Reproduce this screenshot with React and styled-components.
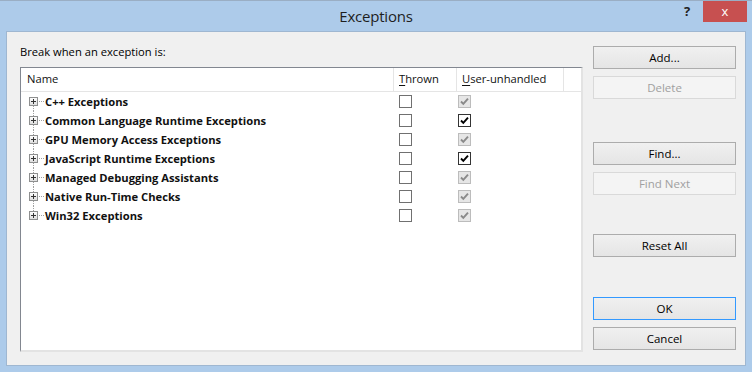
// Dependencies
import React from 'react';
import styled, { createGlobalStyle } from 'styled-components';

// Styles
const GlobalStyle = createGlobalStyle`
  html, body {
    margin: 0;
    padding: 0;
    background: #adcbea;
  }
  * {
    box-sizing: border-box;
  }
`

const Frame = styled.div`
  width: 752px;
  height: 372px;
  background: #adcbea;
  border-top: 1px solid #9aaec4;
  font-family: "Segoe UI", "Open Sans", "Noto Sans", sans-serif;
  color: #000;
  display: flex;
  flex-direction: column;
`

const TitleBar = styled.div`
  height: 30px;
  display: grid;
  grid-template-columns: 1fr auto 1fr;
  align-items: start;
`

const Title = styled.div`
  font-size: 15px;
  line-height: 30px;
  color: #1e1e1e;
  letter-spacing: -0.2px;
`

const Controls = styled.div`
  grid-column: 3;
  display: flex;
  justify-content: flex-end;
  align-items: flex-start;
  padding-right: 5px;
`

const HelpButton = styled.div`
  width: 26px;
  height: 21px;
  font-size: 13px;
  font-weight: bold;
  line-height: 21px;
  text-align: center;
  color: #222;
  margin-right: 3px;
`

const CloseButton = styled.div`
  width: 44px;
  height: 21px;
  background: #c75050;
  color: #fff;
  font-size: 13px;
  line-height: 20px;
  text-align: center;
`

const Client = styled.div`
  margin: 0 6px 6px 6px;
  flex: 1;
  background: #f0f0f0;
  border: 1px solid #9fb7d1;
  display: grid;
  grid-template-columns: 563px 143px;
  column-gap: 10px;
  padding: 0 9px 0 13px;
`

const LeftColumn = styled.div`
  display: flex;
  flex-direction: column;
  padding-top: 12px;
`

const Label = styled.div`
  font-size: 11.2px;
  line-height: 15px;
  margin-bottom: 8px;
`

const ListBox = styled.div`
  height: 285px;
  background: #fff;
  border-top: 1px solid #828790;
  border-left: 1px solid #828790;
  border-right: 2px solid #e3e3e3;
  border-bottom: 2px solid #e3e3e3;
  display: grid;
  grid-template-columns: 373px 63px 107px 1fr;
  grid-template-rows: 24px;
  grid-auto-rows: 19px;
  align-content: start;
`

const HeaderCell = styled.div`
  height: 24px;
  border-bottom: 1px solid #e5e5e5;
  border-right: ${p => (p.$last ? 'none' : '1px solid #e5e5e5')};
  padding-left: ${p => p.$pad}px;
  font-size: 11.2px;
  line-height: 22px;
  color: #111;

  u {
    text-decoration: underline;
    text-underline-offset: 2px;
  }
`

const NameCell = styled.div`
  display: flex;
  align-items: center;
  padding-left: 8px;
  font-size: 11.2px;
  font-weight: bold;
  color: #111;
`

const TreeIcon = styled.svg`
  flex: none;
`

const CheckCell = styled.div`
  display: flex;
  align-items: center;
  padding-left: ${p => p.$pad}px;
`

const Box = styled.div`
  width: 13px;
  height: 13px;
  border: 1px solid ${p => (p.$disabled ? '#bcbcbc' : p.$checked ? '#333' : '#707070')};
  background: ${p => (p.$disabled ? '#e6e6e6' : '#fff')};
  display: flex;
  align-items: center;
  justify-content: center;
`

const RightColumn = styled.div`
  display: flex;
  flex-direction: column;
  padding-top: 14px;
`

const Button = styled.div`
  height: 23px;
  margin-top: ${p => p.$gapBefore}px;
  border: 1px solid ${p => (p.$focused ? '#3399ff' : p.$disabled ? '#d9d9d9' : '#acacac')};
  background: ${p => (p.$disabled ? '#f4f4f4' : 'linear-gradient(#f0f0f0, #e5e5e5)')};
  color: ${p => (p.$disabled ? '#a0a0a0' : '#000')};
  font-size: 11.5px;
  line-height: 21px;
  text-align: center;
`

// Data
const exceptions = [
  { name: 'C++ Exceptions', thrown: false, unhandled: 'disabled' },
  { name: 'Common Language Runtime Exceptions', thrown: false, unhandled: 'checked' },
  { name: 'GPU Memory Access Exceptions', thrown: false, unhandled: 'disabled' },
  { name: 'JavaScript Runtime Exceptions', thrown: false, unhandled: 'checked' },
  { name: 'Managed Debugging Assistants', thrown: false, unhandled: 'disabled' },
  { name: 'Native Run-Time Checks', thrown: false, unhandled: 'disabled' },
  { name: 'Win32 Exceptions', thrown: false, unhandled: 'disabled' },
]

// Components
const TreeExpander = ({ first, last }) => (
  <TreeIcon width="16" height="19" viewBox="0 0 16 19">
    {!first && <line x1="4.5" y1="0" x2="4.5" y2="5" stroke="#a0a0a0" strokeDasharray="1 1" />}
    {!last && <line x1="4.5" y1="14" x2="4.5" y2="19" stroke="#a0a0a0" strokeDasharray="1 1" />}
    <line x1="10" y1="9.5" x2="15" y2="9.5" stroke="#a0a0a0" strokeDasharray="1 1" />
    <defs>
      <linearGradient id="pbg" x1="0" y1="0" x2="0" y2="1">
        <stop offset="0" stopColor="#ffffff" />
        <stop offset="1" stopColor="#dcdcdc" />
      </linearGradient>
    </defs>
    <rect x="0.5" y="5.5" width="8" height="8" fill="url(#pbg)" stroke="#8e8f8f" />
    <line x1="2" y1="9.5" x2="7" y2="9.5" stroke="#333" />
    <line x1="4.5" y1="7" x2="4.5" y2="12" stroke="#333" />
  </TreeIcon>
)

const CheckBox = ({ state }) => {
  const disabled = state === 'disabled'
  const checked = state === 'checked' || disabled
  return (
    <Box $disabled={disabled} $checked={checked}>
      {checked && (
        <svg width="9" height="9" viewBox="0 0 9 9">
          <path d="M1 4.5 L3.3 6.8 L8 1.6" fill="none" stroke={disabled ? '#8a8a8a' : '#000'} strokeWidth="1.9" />
        </svg>
      )}
    </Box>
  )
}

const App = () => {
  return (
    <Frame>
      <GlobalStyle />
      <TitleBar>
        <div />
        <Title>Exceptions</Title>
        <Controls>
          <HelpButton>?</HelpButton>
          <CloseButton>x</CloseButton>
        </Controls>
      </TitleBar>
      <Client>
        <LeftColumn>
          <Label>Break when an exception is:</Label>
          <ListBox>
            <HeaderCell $pad={6}>Name</HeaderCell>
            <HeaderCell $pad={5}><u>T</u>hrown</HeaderCell>
            <HeaderCell $pad={5}><u>U</u>ser-unhandled</HeaderCell>
            <HeaderCell $last />
            {exceptions.map((ex, i) => (
              <React.Fragment key={ex.name}>
                <NameCell>
                  <TreeExpander first={i === 0} last={i === exceptions.length - 1} />
                  {ex.name}
                </NameCell>
                <CheckCell $pad={5}>
                  <CheckBox state={ex.thrown ? 'checked' : 'unchecked'} />
                </CheckCell>
                <CheckCell $pad={1}>
                  <CheckBox state={ex.unhandled} />
                </CheckCell>
                <div />
              </React.Fragment>
            ))}
          </ListBox>
        </LeftColumn>
        <RightColumn>
          <Button $gapBefore={0}>Add...</Button>
          <Button $gapBefore={7} $disabled>Delete</Button>
          <Button $gapBefore={43}>Find...</Button>
          <Button $gapBefore={7} $disabled>Find Next</Button>
          <Button $gapBefore={39}>Reset All</Button>
          <Button $gapBefore={40} $focused>OK</Button>
          <Button $gapBefore={7}>Cancel</Button>
        </RightColumn>
      </Client>
    </Frame>
  )
}

export default App
